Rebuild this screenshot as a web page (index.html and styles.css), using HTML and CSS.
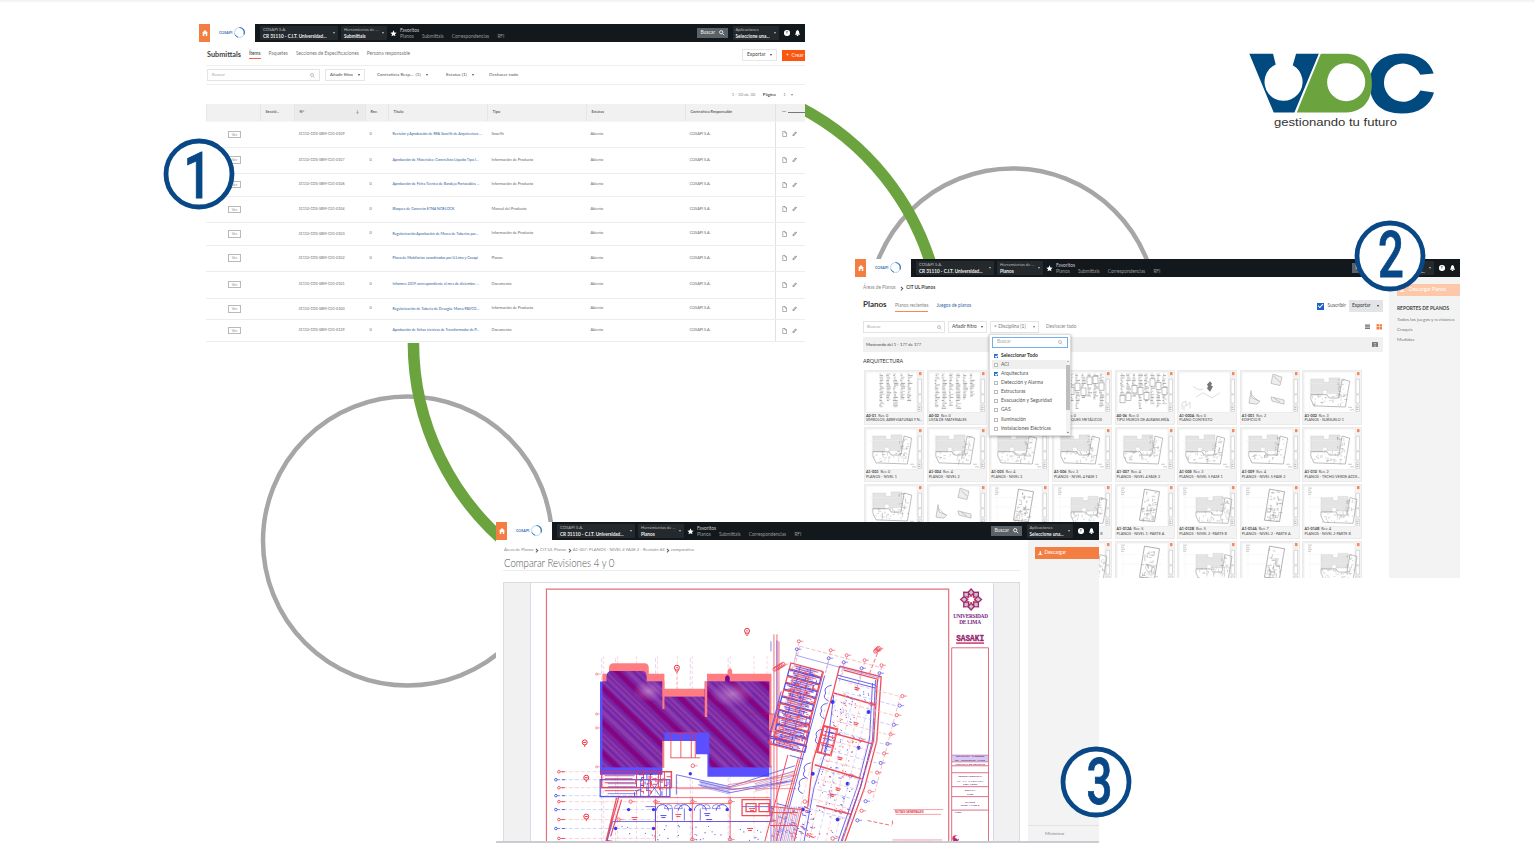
FILE: index.html
```html
<!DOCTYPE html>
<html lang="es">
<head>
<meta charset="utf-8">
<title>VDC - gestionando tu futuro</title>
<link rel="stylesheet" href="styles.css">
</head>
<body>
<main class="slide">
  <svg class="rings" viewBox="0 0 1535 862" fill="none">
    <circle cx="407.500" cy="541" r="144.500" stroke="#a6a6a6" stroke-width="4.500"/>
    <circle cx="1012.500" cy="313" r="144.500" stroke="#a6a6a6" stroke-width="4.500"/>
    <path d="M413.500 335A264 264 0 0 0 520 554M800 107.500A264 264 0 0 1 934 275" stroke="#6ba43f" stroke-width="11.500"/>
  </svg>

  <div class="brand">
    <svg class="brand-mark" viewBox="40 35 560 188">
      <path fill="#004a80" d="M44 40H115L123 72A57 57 0 1 0 174 74L184 40H252L179 216H117Z"/>
      <path fill="#004a80" d="M596 99L556 103A57 57 0 1 0 556 150L597 156C585 196 553 219 500 219C440 219 404 187 404 130C404 72 444 39 500 39C550 39 584 61 596 99Z"/>
      <path fill="#6ba43f" fill-rule="evenodd" d="M258 40H335C385 42 411 78 411 128C411 180 385 213 335 216H186ZM391 125A57 57 0 1 0 277 125A57 57 0 1 0 391 125Z"/>
    </svg>
    <div class="brand-tag">gestionando tu futuro</div>
  </div>

  <section class="win win-submittals">
    <div class="topbar-slot" data-tool="Submittals"></div>
    <div class="sub-body">
      <div class="row title-row">
        <h1 class="sub-title">Submittals</h1>
        <span class="tab tab-on">Ítems</span><span class="tab">Paquetes</span><span class="tab">Secciones de Especificaciones</span><span class="tab">Persona responsable</span>
        <span class="btn export">Exportar<i class="caret"></i></span>
        <span class="btn create">+&nbsp; Crear</span>
      </div>
      <div class="row filter-row">
        <span class="search">Buscar<svg viewBox="0 0 10 10"><circle cx="4" cy="4" r="3"/><path d="M6.500 6.500L9 9"/></svg></span>
        <span class="btn add">Añadir filtro<i class="caret"></i></span>
        <span class="filter f1">Contratista Resp... &nbsp;(1)<i class="caret"></i></span>
        <span class="filter f2">Estatus (1)<i class="caret"></i></span>
        <span class="filter">Deshacer todo</span>
      </div>
      <div class="row pager"><span>1 - 30 de 30</span><b>Página</b><span>1 <i class="caret"></i></span></div>
      <div class="table" id="table"></div>
    </div>
  </section>

  <section class="win win-planos">
    <div class="topbar-slot" data-tool="Planos"></div>
    <div class="pl-body">
      <div class="pl-main">
        <div class="crumbs">Áreas de Planos <i class="chev"></i> <b>CIT UL Planos</b></div>
        <div class="row pl-title">
          <h1>Planos</h1><span class="pl-tab on">Planos recientes</span><span class="pl-tab">Juegos de planos</span>
          <span class="subscribe"><i class="check big"></i>Suscribir</span>
          <span class="pl-export">Exportar<i class="caret"></i></span>
        </div>
        <div class="row pl-filter">
          <span class="search">Buscar<svg viewBox="0 0 10 10"><circle cx="4" cy="4" r="3"/><path d="M6.500 6.500L9 9"/></svg></span>
          <span class="btn">Añadir filtro<i class="caret"></i></span>
          <span class="btn disc">× Disciplina (1)<i class="caret"></i></span>
          <span class="undo">Deshacer todo</span>
          <svg class="views" viewBox="0 0 18 6"><path fill="#777" d="M0 .5h5v1.200H0zM0 2.200h5v1.200H0zM0 3.900h5v1.200H0z"/><path fill="#f47e42" d="M11.500 .3h2.500v2.300h-2.500zM14.500 .3h2.500v2.300h-2.500zM11.500 3.100h2.500v2.300h-2.500zM14.500 3.100h2.500v2.300h-2.500z"/></svg>
        </div>
        <div class="row showing">Mostrando del 1 - 177 de 177<svg viewBox="0 0 6 5"><rect width="6" height="5" rx=".5" fill="#777"/><path d="M1.800 1l1.200 1.300L4.200 1M1.800 4h2.400" stroke="#fff" stroke-width=".6" fill="none"/></svg></div>
        <h2 class="group">ARQUITECTURA</h2>
        <div class="cards" id="cards"></div>
        <div class="menu">
          <span class="search focus">Buscar<svg viewBox="0 0 10 10"><circle cx="4" cy="4" r="3"/><path d="M6.500 6.500L9 9"/></svg></span>
          <ul class="options">
            <li class="all"><i class="check"></i>Seleccionar Todo</li>
            <li class="hover"><i class="box"></i>ACI</li>
            <li><i class="check"></i>Arquitectura</li>
            <li><i class="box"></i>Detección y Alarma</li>
            <li><i class="box"></i>Estructuras</li>
            <li><i class="box"></i>Evacuación y Seguridad</li>
            <li><i class="box"></i>GAS</li>
            <li><i class="box"></i>Iluminación</li>
            <li><i class="box"></i>Instalaciones Eléctricas</li>
          </ul>
          <div class="scroll"><b class="up"></b><i></i><b class="down"></b></div>
        </div>
      </div>
      <aside class="pl-side">
        <div class="download pale"><svg viewBox="0 0 10 10"><path d="M4 0h2v4h2L5 7.500 2 4h2zM0 7h10v3H0z"/></svg>&nbsp; Descargar Planos</div>
        <h3>REPORTES DE PLANOS</h3>
        <p>Todos los juegos y revisiones</p><p>Croquis</p><p>Medidas</p>
      </aside>
    </div>
  </section>

  <section class="win win-compare">
    <div class="topbar-slot" data-tool="Planos"></div>
    <div class="cmp-body">
      <div class="cmp-main">
        <div class="crumbs">Áreas de Planos <i class="chev"></i> CIT UL Planos <i class="chev"></i> A1-007: PLANOS - NIVEL 4 FASE 2 - Revisión #4 <i class="chev"></i> comparativa</div>
        <h1 class="cmp-title"><span>Comparar Revisiones 4 y 0</span></h1>
        <div class="viewer">
          <svg class="sheet" id="sheet" viewBox="530 582 464 260" fill="none">
            <defs>
              <clipPath id="redClip"><path id="redShape" d="M601.700 672.700H608.300V667Q608.500 662 613 662H644Q648.300 662 648.300 667V672.700H664V687.700H706.700V672.700H727.500V669Q729.800 665 732 669V672.700H771.500V766.700H709V731.700H664V766.700H601.700Z"/></clipPath>
              <clipPath id="blueClip"><path id="blueShape" d="M599.300 680.300H606V675Q606 669.700 611 669.700H641Q646 669.700 646 675V680.300H662V695.700H704.500V680.300H725V676Q727.500 672 729.500 676V680.300H769.300V776H707V753.700H695.700V740H662V774H599.300Z"/></clipPath>
              <pattern id="hatch" width="47" height="200" patternUnits="userSpaceOnUse" patternTransform="translate(600 660) rotate(-46)">
                <rect width="47" height="200" fill="#7a25a3"/>
                <path stroke="#86047f" stroke-width="5" d="M4 0V200M29 0V200"/>
                <path stroke="#8c3bab" stroke-width="2.500" d="M11 0V200M22 0V200M39 0V200"/>
                <path stroke="#a858b8" stroke-width=".7" d="M13 0V200M18 0V200M34 0V200M43 0V200"/>
                <path stroke="#5f28b4" stroke-width=".8" d="M15.500 0V200M25 0V200M36 0V200"/>
              </pattern>
              <radialGradient id="glow"><stop offset="0" stop-color="#d8a0d4" stop-opacity=".6"/><stop offset="1" stop-color="#c080c8" stop-opacity="0"/></radialGradient>
            </defs>
            <g id="planUnder"></g>
            <use href="#redShape" fill="#ff7d80"/>
            <use href="#blueShape" fill="#5a50ff"/>
            <g clip-path="url(#redClip)"><g clip-path="url(#blueClip)">
              <rect x="598" y="660" width="176" height="118" fill="url(#hatch)"/>
              <ellipse cx="648" cy="690" rx="16" ry="11" fill="url(#glow)"/><ellipse cx="732" cy="693" rx="22" ry="13" fill="url(#glow)"/>
            </g></g>
            <path fill="#ff7d80" d="M662 680h2v28h-2zM704.500 680h2.500v36h-2.500zM662 740h2v27h-2z"/>
            <path fill="#fff" d="M664 740h31.700v13.700h11.300v24H664z"/>
            <g id="planOver" opacity=".86"></g>
            <path stroke="#e56f7d" stroke-width="1.200" d="M545.500 842V587.500H949.500V842"/>
            <path stroke="#dd6f86" stroke-width="1" d="M952.500 842V646.500H989.500V842M952.500 754.500h37M952.500 761h37M952.500 765h37M952.500 772h37M952.500 786h37M952.500 796h37M952.500 809.500h37"/>
            <rect x="953" y="754" width="36" height="7" fill="#b8a8ea" opacity=".6"/>
            <g class="block-text" fill="#7a267e" text-anchor="middle">
              <text class="uni" x="971.500" y="616.800" textLength="35">UNIVERSIDAD</text>
              <text class="uni" x="971" y="622.300" textLength="22">DE LIMA</text>
              <text class="sasaki" x="971" y="640" textLength="28" lengthAdjust="spacingAndGlyphs">SASAKI</text>
              <text x="971" y="756.200">REVISIÓN 0 · 04/08/2020</text>
              <text x="971" y="760.200">No. · Descripción · Fecha</text>
              <text x="971" y="764.300">HISTORIAL DE REVISIÓN</text>
              <text x="971" y="776.500">CENTRO INTEGRAL</text>
              <text x="971" y="781" textLength="27">AV. LA FONTANA</text>
              <text x="971" y="784.500">LIMA, PERÚ</text>
              <text x="971" y="790">ESCALA</text><text x="971" y="794">1:100</text>
              <text x="971" y="802">PLANOS</text><text x="971" y="805.500">NIVEL 4 FASE 2</text>
              <text x="959" y="812.700">Llave</text>
              <text x="910" y="812.700" fill="#e34c55" class="notes" textLength="29">NOTAS GENERALES</text>
              <path stroke="#e34c55" stroke-width="1" stroke-dasharray="2 .7" d="M904 841h30"/>
            </g>
            <path stroke="#c23a68" stroke-width="1.500" d="M957 641.800h28"/>
            <path stroke="#ef7b80" stroke-width=".7" d="M894 809h50M896 813.800h46M893 839.500h50"/>
            <g id="rosette"></g>
            <circle cx="956.500" cy="838" r="3.300" fill="#e5304a"/><circle cx="958" cy="837" r="2" fill="#fff"/><circle cx="956.500" cy="839" r="1.200" fill="#5038d0"/>
          </svg>
        </div>
      </div>
      <aside class="cmp-side"><div class="download"><svg viewBox="0 0 10 10"><path d="M4 0h2v4h2L5 7.500 2 4h2zM0 7h10v3H0z"/></svg> Descargar</div><div class="minimize">Minimizar</div></aside>
    </div>
  </section>

  <svg class="badge b1" viewBox="0 0 72 72"><circle cx="36" cy="36" r="33"/><text transform="translate(34.500 59.500) scale(.76 1)">1</text></svg>
  <svg class="badge b2" viewBox="0 0 72 72"><circle cx="36" cy="36" r="33"/><text transform="translate(37 56.700) scale(.7 1)">2</text></svg>
  <svg class="badge b3" viewBox="0 0 72 72"><circle cx="36" cy="36" r="33"/><text transform="translate(39.500 57.500) scale(.7 1)">3</text></svg>
</main>
<script src="app.js"></script>
</body>
</html>
```

FILE: styles.css
```css
* { box-sizing: border-box; }
body { margin: 0; background: #fff; font-family: Lato, "Open Sans", sans-serif; }
h1, h2, h3, p, ul { margin: 0; padding: 0; }
ul { list-style: none; }
.slide { position: relative; width: 1535px; height: 862px; overflow: hidden; background: linear-gradient(#efefef, #fff 3px); }
.rings { position: absolute; left: 0; top: 0; width: 1535px; height: 862px; }
.row { display: flex; align-items: center; }

.brand { position: absolute; left: 1248px; top: 51.500px; width: 187px; }
.brand-mark { display: block; width: 187px; height: 63px; }
.brand-tag { font: 11px/14px "Liberation Sans", Arial, sans-serif; color: #333; margin: 0.500px 0 0 26px; transform: scaleX(1.190); transform-origin: left; white-space: nowrap; }

.win { position: absolute; overflow: hidden; white-space: nowrap; font-size: 4px; line-height: 1.200; color: #555; display: flex; flex-direction: column; }
.win-submittals { left: 199px; top: 23px; width: 606px; height: 320px; padding-top: 1px; }
.win-planos { left: 855px; top: 259px; width: 605px; height: 319px; background: #fff; }
.win-compare { left: 496px; top: 522px; width: 603px; height: 321px; background: #fff; border-bottom: 2px solid #c9ccd2; }

/* application top bar */
.topbar-slot { flex: none; height: 17.500px; }
.topbar { display: flex; align-items: center; height: 100%; background: #13181c; color: #ddd; }
.home { width: 11px; height: 100%; background: #f47e42; display: flex; align-items: center; justify-content: center; }
.home svg { width: 6px; height: 6px; fill: #fff; }
.cosapi { width: 45px; height: 100%; background: #fff; display: flex; align-items: center; padding-left: 9px; gap: 1px; color: #3f76b8; font-size: 3.700px; font-weight: 900; }
.cosapi svg { width: 13px; height: 13px; }
.pick { height: 14px; background: #24292d; border-radius: 1px; padding: 1px 3px; display: flex; align-items: center; justify-content: space-between; font-size: 4.200px; line-height: 6px; color: #bbb; }
.pick b { display: block; color: #eee; font-size: 4.650px; }
.pick.project { width: 78px; margin-left: 5px; }
.pick.tools { width: 46px; margin-left: 3px; }
.pick.apps { width: 46px; margin-left: 5px; }
.star { width: 7px; height: 7px; fill: #fff; margin: 1px 3px 0 3px; }
.favs { font-size: 4.750px; line-height: 6.200px; color: #ccc; padding-top: 1px; }
.favs div { display: flex; gap: 8.200px; color: #999; }
.find { margin-left: auto; width: 31px; height: 10.500px; background: #5a6268; color: #eee; font-size: 4.900px; display: flex; align-items: center; justify-content: space-between; padding: 0 3px 0 4px; }
.find svg { width: 5.500px; height: 5.500px; fill: none; stroke: #fff; stroke-width: 1.500; }
.help { width: 5.500px; height: 5.500px; border-radius: 50%; background: #fff; color: #13181c; font-size: 4px; line-height: 5.500px; text-align: center; font-weight: 900; margin: 0 5.500px; }
.bell { width: 5px; height: 6px; fill: #fff; margin-right: 5px; }
.caret { display: inline-block; border: 1.500px solid transparent; border-top: 2px solid currentColor; border-bottom: 0; }

.search { display: flex; align-items: center; justify-content: space-between; border: 1px solid #e4e4e4; color: #aaa; background: #fff; padding: 0 4px; }
.search svg { width: 5px; height: 5px; fill: none; stroke: #888; stroke-width: 1; }
.btn { display: flex; align-items: center; justify-content: space-between; border: 1px solid #e6e6e6; background: #fff; color: #444; padding: 0 4px; }

/* submittals list */
.sub-body { flex: 1; margin-left: 7px; background: #fff; }
.title-row { height: 24.500px; border-bottom: 1px solid #eee; padding-top: 4px; }
.sub-title { font-size: 7.300px; font-weight: 700; color: #444; width: 43px; padding-left: 1px; }
.tab { font-size: 4.800px; color: #777; margin-right: 8px; padding-bottom: 1.500px; border-bottom: 1px solid transparent; }
.tab-on { color: #333; border-bottom-color: #f0644f; }
.export { margin-left: auto; width: 35px; height: 12px; font-size: 4.900px; }
.create { width: 23px; height: 11px; margin-left: 5px; background: #fb560f; border: 0; color: #fff; font-size: 5px; }
.filter-row { height: 19px; border-bottom: 1px solid #eee; padding-left: 1px; }
.filter-row .search { width: 113px; height: 12px; font-size: 4.300px; }
.filter-row .add { width: 40px; height: 12px; margin-left: 5px; font-size: 4.400px; }
.filter { font-size: 4.550px; color: #555; display: flex; align-items: center; }
.filter .caret { margin-left: 5px; }
.f1 { width: 69px; margin-left: 12px; }
.f2 { width: 43px; }
.pager { height: 19px; justify-content: flex-end; gap: 7.500px; padding-right: 12.500px; font-size: 4.400px; color: #888; }
.pager b { color: #555; }
.pager .caret { margin-left: 3.500px; }
.table { color: #666; font-size: 3.850px; }
.tr { display: grid; grid-template-columns: 54px 34px 71px 23px 99px 99px 99px 90px 30px; border-bottom: 1px solid #ededed; }
.tr > span { display: flex; align-items: center; padding-left: 4.500px; }
.tr > .code { font-size: 3.650px; }
.tr > .act { border-left: 1px solid #e2e2e2; gap: 5px; padding-left: 5.500px; }
.act svg { width: 5px; height: 6px; fill: none; stroke: #666; stroke-width: 1; }
.act hr { width: 17px; height: 1px; border: 0; background: #777; margin: 0 0 0 -3px; }
.th { height: 18px; background: #f1f1f1; font-weight: 700; border-bottom-color: #f5f5f5; }
.th > span { border-left: 1px solid #e6e6e6; }
.th > .sorted { background: #ebebeb; justify-content: space-between; padding-right: 6px; }
.tr .link { color: #2f5a97; font-size: 3.650px; }
.ver { border: 1px solid #b9b9b9; width: 13px; height: 7.500px; line-height: 5.500px; text-align: center; margin-left: 17.500px; color: #888; font-style: normal; }

/* plan list */
.crumbs { display: flex; align-items: center; font-size: 4.700px; color: #888; }
.crumbs b { color: #444; }
.chev { width: 2.500px; height: 2.500px; border: solid #555; border-width: .8px .8px 0 0; transform: rotate(45deg); margin: 0 3px; }
.pl-body { flex: 1; display: flex; min-height: 0; }
.pl-main { width: 534px; padding: 0 6px 0 8px; position: relative; }
.pl-main .crumbs { height: 21px; padding-top: 2px; }
.pl-main .crumbs .chev { margin: 0 4px; }
.pl-title { height: 17px; }
.pl-title h1 { font-size: 8px; color: #333; width: 32px; margin-top: -2px; }
.pl-tab { font-size: 4.700px; color: #3d6cab; margin-right: 8px; padding-bottom: 2px; border-bottom: 1px solid transparent; margin-top: 3px; }
.pl-tab.on { color: #888; border-color: #f08b57; }
.subscribe { margin-left: auto; display: flex; align-items: center; gap: 4px; font-size: 4.900px; }
.check, .box { flex: none; width: 4px; height: 4px; background: #2a70cc; }
.box { background: #fff; border: .6px solid #bbb; }
.check.big { width: 7px; height: 7px; background: #2161c4; }
.check::after { content: ""; display: block; width: 50%; height: 25%; margin: 25% auto 0; border: solid #fff; border-width: 0 0 .7px .7px; transform: rotate(-45deg); }
.pl-export { width: 34px; height: 12px; background: #e3e4e7; margin-left: 3px; font-size: 4.900px; color: #333; display: flex; align-items: center; justify-content: space-between; padding: 0 4px 0 3px; }
.pl-filter { height: 15px; margin-top: 5px; font-size: 4.750px; }
.pl-filter .search { width: 82px; height: 11.500px; padding: 0 2px 0 3px; font-size: 4.600px; }
.pl-filter .btn { height: 11.500px; width: 39px; margin-left: 3px; padding: 0 3px; }
.pl-filter .btn.disc { width: 49px; color: #777; font-size: 4.950px; }
.undo { margin-left: 7px; color: #888; }
.views { width: 18px; height: 6px; margin-left: auto; }
.showing { height: 15px; background: #f0f0f0; margin-top: 2.500px; padding: 0 5px 0 3px; font-size: 4.200px; justify-content: space-between; color: #444; }
.showing svg { width: 6px; height: 5px; }
.group { font-size: 5.300px; font-weight: 400; height: 18px; line-height: 19px; color: #333; }
.cards { display: grid; grid-template-columns: repeat(8, 60px); gap: 2.300px 2.650px; padding-left: 1px; }
.card { height: 54.700px; background: #f3f3f3; border: 1px solid #ebebeb; font-size: 3.700px; line-height: 4.900px; color: #444; }
.card svg { display: block; width: 58px; height: 42.500px; }
.card div { padding-left: 1px; }
.menu { position: absolute; left: 134px; top: 57px; width: 82px; height: 102px; background: #fff; border: 1px solid #ddd; box-shadow: 0 1px 3px #0005; padding: 2px; }
.search.focus { border-color: #74aee8; width: 76px; height: 11.500px; font-size: 4.700px; }
.options { margin-top: 3px; font-size: 4.950px; color: #555; }
.options li { height: 9.150px; display: flex; align-items: center; gap: 3px; padding-left: 2px; }
.options .all { color: #333; font-weight: 700; }
.options .hover { background: #efefef; }
.scroll { position: absolute; right: 0; top: 25px; width: 4.500px; height: 74px; background: #f2f2f2; display: flex; flex-direction: column; align-items: center; justify-content: space-between; padding: 1px 0; }
.scroll i { width: 100%; height: 45px; background: #bdbdbd; margin-bottom: 19px; }
.scroll b { border: 1.300px solid transparent; }
.scroll .up { border-bottom: 1.500px solid #777; border-top: 0; }
.scroll .down { border-top: 1.500px solid #444; border-bottom: 0; }
.pl-side { flex: 1; background: #f3f3f3; padding: 7.500px 0 0 8px; font-size: 4.600px; color: #777; }
.pl-side h3 { font-size: 4.850px; font-weight: 700; color: #444; margin: 9.500px 0 6px; }
.pl-side p { height: 9.800px; }
.download { height: 12px; background: #f47e42; color: #fff; font-size: 4.900px; padding-left: 3px; display: flex; align-items: center; gap: 2px; }
.download svg { width: 4.500px; height: 4.500px; fill: #fff; }
.download.pale { background: #fdc7a9; }

/* revision comparison */
.cmp-body { flex: 1; display: flex; min-height: 0; }
.cmp-main { width: 532px; padding: 0 8px 0 7px; }
.cmp-main .crumbs { font-size: 4.250px; height: 14px; padding: 7px 0 0 1px; }
.cmp-main .crumbs .chev { margin: 0 2.500px 0 1.500px; }
.cmp-title { font-weight: 300; font-size: 11.500px; line-height: 14px; padding: 2px 0 0 0.500px; height: 17px; border-bottom: 1px solid #ececec; color: #555; }
.cmp-title span { display: inline-block; transform: scaleX(.84); transform-origin: left; }
.viewer { margin-top: 11.500px; height: 260px; background: #f1f1f1; border: 1px solid #dcdce0; padding-left: 26px; }
.sheet { display: block; width: 464px; height: 260px; background: #fff; border: solid #d9d9ea; border-width: 0 1px; }
.cmp-side { flex: 1; background: #f3f3f3; padding: 7.500px 0 0 7px; display: flex; flex-direction: column; }
.minimize { margin: auto 0 0 -7px; height: 16px; line-height: 16px; border-top: 1px solid #e2e2e2; padding-left: 17px; font-size: 4.500px; color: #888; }
.block-text { font: 700 2.500px "Liberation Sans", sans-serif; }
.block-text .uni { font: 700 5.400px "Liberation Serif", serif; }
.block-text .sasaki { font: 700 10px "Liberation Mono", monospace; stroke: #b02a68; stroke-width: .4; }
.block-text .notes { font-size: 3.400px; }

.badge { position: absolute; width: 72px; height: 72px; }
.badge circle { fill: #fff; stroke: #084887; stroke-width: 4.800; }
.badge text { fill: #084887; stroke: #084887; stroke-width: .9; font: 500 65px Roboto, sans-serif; text-anchor: middle; }
.b1 { left: 163px; top: 137.500px; }
.b2 { left: 1354px; top: 220px; }
.b3 { left: 1060px; top: 746px; }
```

FILE: app.js
```js
// Top bar shared by the three application windows
const caret = '<i class="caret"></i>';
document.querySelectorAll('.topbar-slot').forEach(slot => {
  slot.innerHTML = `<div class="topbar">
    <div class="home"><svg viewBox="0 0 12 12"><path d="M6 0L12 6H10.500V12H7.500V8H4.500V12H1.500V6H0Z"/></svg></div>
    <div class="cosapi">COSAPI<svg viewBox="0 0 26 26" fill="none"><circle cx="13" cy="13" r="10" stroke="#9fc4e6" stroke-width="1.500"/><path d="M13 3A10 10 0 0 1 22 17" stroke="#3d78b8" stroke-width="2.500"/><path d="M4 17A10 10 0 0 0 10 22.500" stroke="#3d78b8" stroke-width="2"/></svg></div>
    <div class="pick project"><span>COSAPI S.A.<b>CR 31110 - C.I.T. Universidad...</b></span>${caret}</div>
    <div class="pick tools"><span>Herramientas de ...<b>${slot.dataset.tool}</b></span>${caret}</div>
    <svg class="star" viewBox="0 0 20 20"><path d="M10 1l2.700 6 6.300.6-4.800 4.200 1.500 6.400L10 15l-5.700 3.200 1.500-6.400L1 7.600 7.300 7z"/></svg>
    <div class="favs">Favoritos<div><span>Planos</span><span>Submittals</span><span>Correspondencias</span><span>RFI</span></div></div>
    <div class="find">Buscar<svg viewBox="0 0 10 10"><circle cx="4" cy="4" r="3"/><path d="M6.500 6.500L9.500 9.500"/></svg></div>
    <div class="pick apps"><span>Aplicaciones<b>Seleccione una...</b></span>${caret}</div>
    <div class="help">?</div>
    <svg class="bell" viewBox="0 0 10 12"><path d="M5 0Q8.500 1 8.500 6L10 9.500H0L1.500 6Q1.500 1 5 0ZM3.500 10h3v2h-3z"/></svg>
  </div>`;
});

// Submittals table: number suffix, title, type, row height
const rows = [
  ['0109', 'Revisión y Aprobación de RFA Sow/fit de Arquitectura ...', 'Sow/fit', 25.5],
  ['0107', 'Aprobación de Materiales: Concrelisto Líquido Tipo I...', 'Información de Producto', 26],
  ['0106', 'Aprobación de Ficha Técnica de Bandeja Portacables ...', 'Información de Producto', 23],
  ['0104', 'Bloques de Concreto ETNA NOELOCK', 'Manual del Producto', 26.5],
  ['0103', 'Regularización Aprobación de Marca de Tuberías par...', 'Información de Producto', 22.5],
  ['0102', 'Plano de Mobiliarios coordinados por U.Lima y Cosapi', 'Planos', 26],
  ['0101', 'Informes 2019 correspondiente al mes de diciembre ...', 'Documento', 27],
  ['0100', 'Regularización de Tubería de Desagüe Marca PAVCO...', 'Información de Producto', 21.5],
  ['0129', 'Aprobación de fichas técnicas de Transformador de P...', 'Documento', 22]
];
const act = '<svg viewBox="0 0 10 12"><path d="M1.500 1h4.500l3 3v7H1.500zM6 1v3h3"/></svg><svg viewBox="0 0 10 12"><path d="M3 10L9 3M1.500 8L7 2M1.500 8l1.500 2M7 2l2 1" stroke-width="1.400"/></svg>';
document.getElementById('table').innerHTML =
  '<div class="tr th"><span></span><span>Secció...</span><span class="sorted">N°<i>↓</i></span><span>Rev.</span><span>Título</span><span>Tipo</span><span>Estatus</span><span>Contratista Responsable</span><span class="act">⋯<hr></span></div>' +
  rows.map(r => `<div class="tr" style="height:${r[3]}px"><span><i class="ver">Ver</i></span><span></span><span class="code">31110-COS-SBM-C01-${r[0]}</span><span>0</span><span class="link">${r[1]}</span><span>${r[2]}</span><span>Abierto</span><span>COSAPI S.A.</span><span class="act">${act}</span></div>`).join('');

// Small deterministic generator for drawing texture
let seed = 7;
const rnd = (a, b) => { seed = (seed * 16807) % 2147483647; return +(a + (b - a) * seed / 2147483647).toFixed(1); };

// Drawing thumbnails
function thumb(kind) {
  let g = '<rect x="1" y="1" width="51" height="39" fill="#fff" stroke="#e2e2e2" stroke-width=".5"/><path d="M53 8h3.500v14H53zM53 23h3.500v8H53zM53 33h3.500v6H53z" fill="#fff" stroke="#bbb" stroke-width=".5"/><path d="M53.500 35h2M53.500 37h2" stroke="#777" stroke-width=".6"/><rect x="54" y="1" width="2.500" height="3" fill="#f58a5a"/>';
  if (kind === 'text' || kind === 'dense') {
    for (let x = kind === 'text' ? 14 - rnd(0, 9) : 4; x < 48; x += kind === 'text' ? 7 : 6) {
      const end = rnd(24, 37);
      for (let y = 3; y < end; y += 1.5) g += `<path d="M${rnd(x, x + 1)} ${y}h${rnd(1.5, 4.8)}" stroke="${y % 4 < 2 ? '#888' : '#b5b5b5'}" stroke-width=".7"/>`;
      if (kind === 'dense') g += `<rect x="${x}" y="${rnd(4, 24)}" width="5" height="7" fill="#fff" stroke="#888" stroke-width=".5"/>`;
    }
  } else if (kind === 'context') {
    g += '<path d="M29 13l3-3 2 2-1 2 2 1-3 5-3-3 1-2z" fill="#777"/><path d="M4 37v-6l4-2v5l4-4v6M6 38v-5M18 25l7-4 9 5 8-5M15 15q7 5 10 2" stroke="#bbb" fill="none" stroke-width=".5"/>';
  } else if (kind === 'site') {
    g += '<g fill="#eee" stroke="#999" stroke-width=".5"><path d="M32 3l9 3-2 8-9-2zM10 19l1 7 8 3-3 3-8-1zM30 25l13 3 0 4-12-3z"/><path d="M33 5l6 6M11 23l6 6M33 26l6 4"/></g>';
  } else {
    const half = kind === 'half', wing = kind === 'wing';
    const s = half ? 'translate(8 3)' : wing ? 'translate(-14 -6) scale(1.250)' : 'translate(-3 -2) scale(1.080)';
    g += `<g transform="${s}" fill="#e4e4e4" stroke="#ccc" stroke-width=".4">` +
      (wing ? '' : '<path d="M10 9h12v3h5v-4h10v14H25v-3h-4v4H10z"/>') +
      (wing ? '<path d="M34 8l12 2-4 23-12-1z" fill="none" stroke="#999" stroke-width=".6"/>' : '<path d="M10 23h15l2 3h9l3-17 7 2-4 23-29-1-3-6z" fill="none" stroke="#999" stroke-width=".6"/>');
    for (let i = 0; i < 30; i++) g += `<path d="M${wing ? rnd(31, 42) : rnd(11, 39)} ${rnd(22, 32)}${i % 2 ? 'h' : 'v'}${rnd(1, 3)}" stroke="#a5a5a5"/>`;
    for (let i = 0; i < 22; i++) g += `<path d="M${rnd(34, 42)} ${rnd(9, 28)}${i % 2 ? 'h' : 'v'}${rnd(1, 3)}" stroke="#999"/>`;
    g += '</g><path d="M7 6v30M4 12h44M5 21h42" stroke="#eee" stroke-width=".4"/>';
    if (half || wing) g += '<path d="M5 3h4M5 5h3M5 7h4M5 9h3" stroke="#aaa" stroke-width=".6"/>';
    else g += '<path d="M45 35h4M47 37.500h4" stroke="#aaa" stroke-width=".6"/>';
  }
  return `<svg viewBox="0 0 58 41" preserveAspectRatio="none">${g}</svg>`;
}
// Sheet number, revision, name, thumbnail; covered cards carry a thumbnail only
const cards = [
  ['A0-01', 0, 'SÍMBOLOS, ABREVIATURAS Y N...', 'text'], ['A0-02', 0, 'LISTA DE MATERIALES', 'text'], ['', '', '', 'text'],
  ['A0-04', 0, 'TIPO TABIQUES METÁLICOS', 'dense'], ['A0-06', 0, 'TIPO MUROS DE ALBAÑILERÍA', 'dense'], ['A1-000A', 0, 'PLANO CONTEXTO', 'context'], ['A1-001', 2, 'EDIFICIO R', 'site'], ['A1-002', 3, 'PLANOS - SUBSUELO 1', 'plan'],
  ['A1-003', 0, 'PLANOS - NIVEL 1', 'plan'], ['A1-004', 4, 'PLANOS - NIVEL 2', 'plan'], ['A1-005', 4, 'PLANOS - NIVEL 3', 'plan'], ['A1-006', 3, 'PLANOS - NIVEL 4 FASE 1', 'plan'],
  ['A1-007', 4, 'PLANOS - NIVEL 4 FASE 2', 'plan'], ['A1-008', 3, 'PLANOS - NIVEL 5 FASE 1', 'plan'], ['A1-009', 4, 'PLANOS - NIVEL 5 FASE 2', 'plan'], ['A1-010', 2, 'PLANOS - TECHO VERDE ACCE...', 'plan'],
  ['', '', '', 'plan'], ['', '', '', 'site'], ['', '', '', 'wing'], ['', '', 'PLANOS - NIVEL 1 - PARTE B', 'half'],
  ['A1-012A', 5, 'PLANOS - NIVEL 1- PARTE A', 'wing'], ['A1-012B', 5, 'PLANOS - NIVEL 2- PARTE B', 'half'], ['A1-014A', 7, 'PLANOS - NIVEL 2 - PARTE A', 'wing'], ['A1-014B', 4, 'PLANOS - NIVEL 2 PARTE B', 'half'],
  ...['half', 'wing', 'half', 'half', 'wing', 'half', 'wing', 'half'].map(k => ['', '', '', k])
];
document.getElementById('cards').innerHTML = cards.map(c =>
  `<div class="card">${thumb(c[3])}<div>${c[0] ? `<b>${c[0]}</b> &nbsp;Rev. ${c[1]}` : '&nbsp;'}</div><div>${c[2]}</div></div>`).join('');

// Comparison drawing: red is the old revision, blue the new one
const R = '#ee3040', B = '#3b35e8';
const line = (d, c, w = .7, dash = '') => `<path d="${d}" stroke="${c}" stroke-width="${w}"${dash ? ` stroke-dasharray="${dash}"` : ''}/>`;
const tag = (x, y, c, r = 1.3) => `<circle cx="${x}" cy="${y}" r="${r}" stroke="${c}" stroke-width=".8"/><path d="M${x + r} ${y}h3" stroke="${c}" stroke-width=".6"/>`;
const dot = (x, y, c = '#1d16f0', r = 1.7) => `<circle cx="${x}" cy="${y}" r="${r}" fill="${c}"/>`;

let under = '';
for (const x of [603, 617, 636, 657, 677, 692, 730, 754, 767]) under += line(`M${x} 655V842`, '#f6a9b2', .5, '3 2');
for (const x of [601, 615, 655, 690, 728]) under += line(`M${x} 657V842`, '#b5b3f5', .5, '4 2');
for (const [y, c] of [[771, R], [779, B], [787, R], [795, B], [801, R], [809, B], [819, R], [828, B], [838, R]]) {
  under += line(`M562 ${y}H655`, c === R ? '#f9b5bb' : '#b9b6fa', .6, '4 2') + tag(c === R ? 558 : 555, y, c) + line(`M561 ${y}h3`, c, .8);
}
for (const [x, y] of [[747, 629.5], [676.5, 666.5]]) under += `<circle cx="${x}" cy="${y}" r="2.500" stroke="${R}" stroke-width="1"/><path d="M${x - 2} ${y + 2}l2 3 2-3M${x - 1} ${y}h2" stroke="${R}" stroke-width=".8"/>`;
under += line('M676.500 671V690', '#f0808a', .5, '3 2');
for (const [x, y] of [[584, 741.5], [585.5, 777], [585.5, 816]]) under += `<circle cx="${x}" cy="${y}" r="2.500" stroke="${R}" stroke-width="1"/><path d="M${x - 1.5} ${y}h3M${x} ${y + 2.5}v2" stroke="${R}"/>`;
for (const y of [673, 713, 727, 766]) under += tag(596, y, '#f0808a', 1.1);
document.getElementById('planUnder').innerHTML = under;

let o = '';
// stair court and west services
o += line('M670.500 732v25M680.500 732v25M691 732v25M695 732v25M670 757h30M670 732h27', R, .9);
o += `<rect x="601" y="771" width="70" height="16" stroke="${R}" stroke-width="1.500"/><rect x="599.500" y="779" width="70" height="17" stroke="${B}" stroke-width="1.200"/>`;
o += line('M604 775h30M604 778h28M604 782h30M604 790h30M636 771v16M643 771v16M650 771v16M658 771v16M664 771v16', R, 1);
o += line('M607 783h28M607 786h28M607 793h28M640 779v17M648 779v17M660 779v17M666 779v17M648 779l12 17M660 779l-12 17', B, .7);
for (let i = 0; i < 45; i++) o += line(`M${rnd(633, 668)} ${rnd(771, 792)}${i % 2 ? 'h' : 'v'}${rnd(2, 5)}`, i % 3 ? R : B, 1);
// access ramp
o += line('M676 774v20M676 774l54 12 65-21M699 781l33 8 55-8M698 784l32 8 62-12', B, .8) + line('M670 787h60l64-16M728 784l70-10M676 788h120', R, .6);
for (let i = 0; i < 6; i++) o += line(`M700 ${780 + i * 1.2}l30 ${6 + i * .3}`, '#7773ec', .6) + line(`M755 ${783 + i * 1.5}l40 -${13 - i}`, i % 2 ? '#f0808a' : '#7773ec', .7);
o += dot(690, 773) + tag(692.5, 765, R, 1.8);
// south rooms
o += line('M617 797h153M655 799v43M692 797v45M730 797v45M655 821h115M655 803h75', R, .8) + line('M618 797l-12 43 24 4M621 799l-11 37M616 797l-11 45', R, 1.2);
o += line('M612 821h43V806h-10M655 808v13h86M672 808v12M684 808v12M700 808v12M742 806h30v15h-32M612 821l-6 21', B, .8);
for (const x of [662, 684, 700, 722]) o += line(`M${x - 6} 810a6 6 0 0 1 12 0`, B, 1);
for (const x of [668, 678, 706, 716]) o += line(`M${x - 4} 808a4 4 0 0 1 8 0z`, B, .6);
for (const [x, y] of [[628, 809], [653, 809], [690, 809], [727, 809], [615, 828], [653, 828]]) o += dot(x, y);
for (const [x, y] of [[655, 801], [692, 801], [730, 801], [692, 839], [730, 839], [618, 819], [630, 801]]) o += tag(x, y, R, 1.7);
for (let i = 0; i < 35; i++) o += dot(rnd(618, 765), rnd(824, 840), B, .6);
for (const [x, y] of [[634, 817], [663, 815], [678, 814], [707, 813], [709, 819], [752, 808], [750, 828]]) o += line(`M${x - 3} ${y}h6M${x - 2} ${y + 2}h4`, x % 2 ? B : R, 1);
o += `<path d="M742 799h28v16h-28zM746 803h10v8h-10zM759 803h10v8h-10z" stroke="${R}" stroke-width="1.300"/>`;
// central axis
o += line('M774 633V842M777 633V842M779 640v90', R, .8) + line('M771 640v10M777 639v85M771 765v77', B, .7);
for (let i = 0; i < 6; i++) o += tag(775 + i * 1.6, 668 - i, R, 2);
o += '<path d="M769 713h8v16h-8z" fill="#ff8a8c"/>' + line('M745 713h30', '#c21356', .6) + line('M770 735l35 10M770 737l20 5', B, 1.2) + line('M770 730l20 3', R, .6);

// west wing, drawn upright and then turned
o += '<g transform="translate(792 662) rotate(15)">';
for (let y = 0; y < 84; y += 7) {
  const c = y % 2 ? B : R, skew = Math.max(0, (y - 40) * .1);
  o += `<rect x="${-1 + skew}" y="${y}" width="33" height="6" stroke="${c}" stroke-width="1.300"/><rect x="${5 + skew}" y="${y + 1}" width="20" height="4" fill="${c}" opacity=".3"/>` + line(`M4 ${y + 2}h24M5 ${y + 4}h18M9 ${y}v6M20 ${y}v6`, y % 2 ? R : B, .7);
}
for (let i = 0; i < 190; i++) o += line(`M${rnd(0, 31)} ${rnd(1, 84)}${i % 3 ? 'h' : 'v'}${rnd(1, 5)}`, i % 2 ? R : B, rnd(.5, 1.1));
o += line('M-2 40V84H32M33 0V140M20 90V190M31 90V190', R, .9) + line('M-3 30V82M35 4V180M22 90h14M22 140h12', B, .8) + '</g>';

// east wing
o += line('M840 665L881.700 675.700 877.300 740 865 787 845 842M844 669l34 9-4 62-13 46-19 56M840 665l-7 28-20 68-5 45', R, 1.3);
o += line('M838 674l38 10M838 677l38 10M876 679l-3 60-12 47-20 56M873 682l-3 56-12 47-20 57M834 694l-6 50-14 44-10 54', B, .9);
o += line('M834 692l42 12M829 731l44 12M815 764l47 14M817 805l35 9', R, 1.5);
for (const [x, y] of [[832, 684], [828, 702], [823, 728], [811, 762], [806, 777]]) o += line(`M${x} ${y}q-9 2-6 8q-4 5 3 8`, B, .9);
for (const [x, y] of [[833, 701], [869, 711], [813, 773], [859, 747], [848, 783], [838, 819], [803, 809]]) o += dot(x, y, '#1d16f0', 2);
for (const [x, y] of [[872, 703], [861, 739], [851, 775], [841, 811], [805, 801], [833, 838]]) o += tag(x, y, R, 1.8);
for (let i = 0; i < 150; i++) {
  const y = rnd(690, 838), t = (y - 690) / 150, x = rnd(836 - t * 30, 870 - t * 26);
  o += i % 3 ? dot(x, y, i % 2 ? B : R, .6) : line(`M${x} ${y}l${rnd(1, 3)} .8`, i % 2 ? B : R, .8);
}
for (const [x, y] of [[857, 686], [856, 721], [840, 756], [838, 787], [832, 793]]) o += line(`M${x - 2} ${y}l5 1.500M${x - 2} ${y + 2}l4 1`, R, 1.2);
o += `<g transform="translate(824 725) rotate(14)"><rect width="14" height="27" stroke="${R}" stroke-width="2"/>` + line('M2 5h10M2 12h10M2 19h10M7 2v23', B, 1) + line('M0 9h14M0 17h14M4 0v27', R, 1.2) + '</g>';
// grid lines and bubbles
for (let i = 0; i < 14; i++) {
  const x = 908 - i * 2.7 - i * .06 * i, y = 695 + i * 9.6, c = i % 2 ? B : R;
  o += tag(+(x - 5).toFixed(1), +y.toFixed(1), c, 1.6) + line(`M${x - 9} ${y}L${x - 62} ${y - 14}`, i % 2 ? '#aeabf8' : '#f7a6ac', .7, '4 2');
}
for (let i = 0; i < 7; i++) o += line(`M${830 + i * 8} ${690 + i * 2}l-38 150`, i % 2 ? '#bab7fa' : '#f8b1b6', .6, '4 2');
o += line('M800 645l84 22M800 645l-10 40M901 695l-28 105', '#f0808a', .6, '4 2') + line('M796 654l84 23', B, .5);
for (const [x, y, c] of [[799, 640, R], [797, 648, B], [831, 649, R], [829, 657, B], [847, 654, R], [844, 661, B], [865, 659, R], [862, 667, B], [882, 664, R], [880, 672, B]]) o += tag(x, y, c, 1.5) + line(`M${x} ${y + 2}l-5 20`, c, .4, '3 2');
for (let i = 0; i < 4; i++) o += tag(876 + i, 650 - i, R, 2);
o += line('M878 652l-8 20M868 820l24 5M893 820v6', R, .8, '4 2');
// court between the wings
for (let i = 0; i < 70; i++) o += line(`M${rnd(771, 812)} ${rnd(805, 838)}l${rnd(1, 4)} 1`, i % 2 ? B : R, .9);
for (let i = 0; i < 14; i++) o += line(`M${771 + i * 1.8} 842l8 -36`, i % 2 ? '#7773ec' : '#f0808a', .7);
o += line('M772 806l30 3-8 33M770 812h28M770 825h26', R, 1);
document.getElementById('planOver').innerHTML = o;

let ro = '';
for (let i = 0; i < 8; i++) ro += `<g transform="translate(972 598) rotate(${i * 45})"><path d="M0 -3.500L3.200 -7 0 -10.500 -3.200 -7Z" fill="#c9c0d4" stroke="#a52868" stroke-width="1.300"/><circle cy="-3.800" r="1" fill="#d03060"/></g>`;
document.getElementById('rosette').innerHTML = ro;
```
